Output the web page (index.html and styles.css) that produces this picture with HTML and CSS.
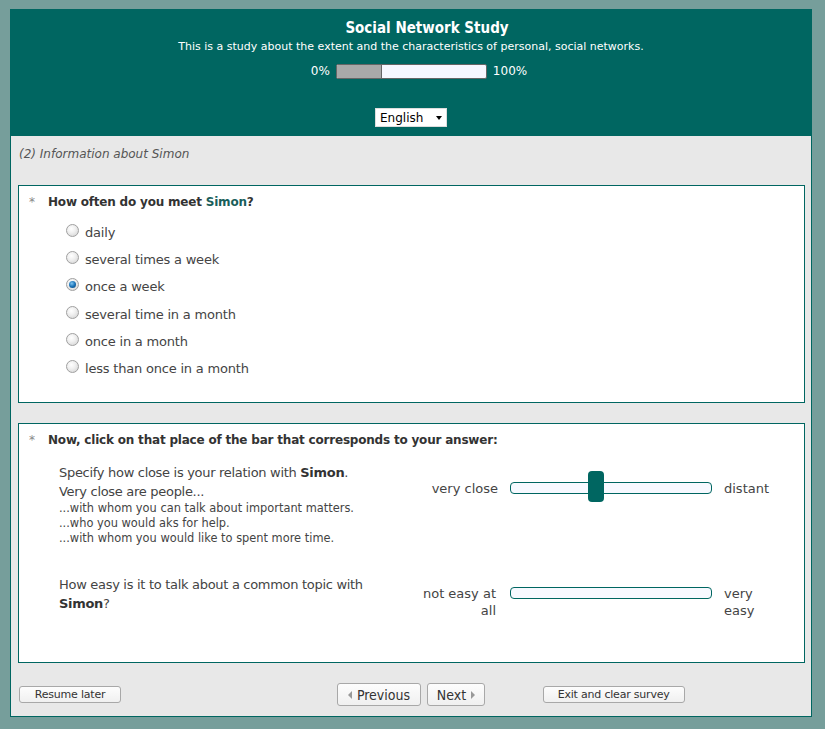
FILE: index.html
```html
<!DOCTYPE html>
<html lang="en">
<head>
<meta charset="utf-8">
<title>Social Network Study</title>
<link rel="stylesheet" href="styles.css">
</head>
<body>
<div class="page">
  <header class="header">
    <h1 class="title">Social Network Study</h1>
    <p class="subtitle">This is a study about the extent and the characteristics of personal, social networks.</p>
    <div class="progress">
      <span class="pct">0%</span>
      <span class="bar"><span class="bar-fill" style="width:30%"></span></span>
      <span class="pct">100%</span>
    </div>
    <div class="lang">
      <span class="select">English<span class="caret"></span></span>
    </div>
  </header>

  <main class="content">
    <p class="group-name">(2) Information about Simon</p>

    <section class="qbox q1">
      <div class="qtitle"><span class="star">*</span><span class="qtext">How often do you meet <span class="name">Simon</span>?</span></div>
      <ul class="answers">
        <li class="answer"><span class="radio"></span>daily</li>
        <li class="answer"><span class="radio"></span>several times a week</li>
        <li class="answer"><span class="radio checked"></span>once a week</li>
        <li class="answer"><span class="radio"></span>several time in a month</li>
        <li class="answer"><span class="radio"></span>once in a month</li>
        <li class="answer"><span class="radio"></span>less than once in a month</li>
      </ul>
    </section>

    <section class="qbox q2">
      <div class="qtitle"><span class="star">*</span><span class="qtext">Now, click on that place of the bar that corresponds to your answer:</span></div>
      <div class="srow srow-a">
        <div class="stext">
          <div class="big">Specify how close is your relation with <b>Simon</b>.</div>
          <div class="big">Very close are people...</div>
          <div class="small">...with whom you can talk about important matters.</div>
          <div class="small">...who you would aks for help.</div>
          <div class="small">...with whom you would like to spent more time.</div>
        </div>
        <div class="slider">
          <div class="lab-l">very close</div>
          <div class="track"><span class="thumb"></span></div>
          <div class="lab-r">distant</div>
        </div>
      </div>
      <div class="srow srow-b">
        <div class="stext">
          <div class="big">How easy is it to talk about a common topic with <b>Simon</b>?</div>
        </div>
        <div class="slider">
          <div class="lab-l">not easy at all</div>
          <div class="track"></div>
          <div class="lab-r">very easy</div>
        </div>
      </div>
    </section>
  </main>

  <footer class="footer">
    <div class="fcol fcol-left"><button class="btn btn-small">Resume later</button></div>
    <div class="fcol fcol-mid">
      <button class="btn btn-nav btn-prev"><span class="tri tri-l"></span>Previous</button>
      <button class="btn btn-nav btn-next">Next<span class="tri tri-r"></span></button>
    </div>
    <div class="fcol fcol-right"><button class="btn btn-small">Exit and clear survey</button></div>
  </footer>
</div>
</body>
</html>
```

FILE: styles.css
```css
* { box-sizing: border-box; }
html, body { margin: 0; padding: 0; }
body {
  background: #769e9b;
  font-family: "DejaVu Sans", Verdana, sans-serif;
  color: #444;
  width: 825px;
  height: 729px;
  overflow: hidden;
}
.page {
  margin: 9px 0 0 10px;
  width: 802px;
  height: 708px;
  border: 1px solid #006661;
  background: #e8e8e8;
  display: flex;
  flex-direction: column;
}
.header {
  background: #006661;
  color: #fff;
  height: 126px;
  padding-top: 9px;
  display: flex;
  flex-direction: column;
  align-items: center;
}
.title {
  margin: 0;
  padding-left: 32px;
  font-family: "DejaVu Sans Condensed", "DejaVu Sans", sans-serif;
  font-size: 15px;
  line-height: 18px;
  font-weight: bold;
}
.subtitle {
  margin: 3px 0 0;
  font-size: 11px;
  line-height: 14px;
}
.progress {
  margin-top: 10px;
  padding-left: 16px;
  display: flex;
  align-items: center;
  gap: 6px;
  font-size: 12px;
  line-height: 15px;
}
.bar {
  display: block;
  width: 151px;
  height: 15px;
  border: 1px solid #666;
  border-radius: 2px;
  background: #f7f8ff;
  overflow: hidden;
}
.bar-fill {
  display: block;
  height: 100%;
  background: #a9a9a9;
  border-right: 1px solid #666;
}
.lang { margin-top: 29px; }
.select {
  display: flex;
  align-items: center;
  width: 72px;
  height: 19px;
  background: #fff;
  color: #000;
  border: 1px solid #ddd;
  font-size: 12px;
  padding-left: 4px;
}
.caret {
  margin-left: auto;
  margin-right: 4px;
  width: 0;
  height: 0;
  border-left: 3.5px solid transparent;
  border-right: 3.5px solid transparent;
  border-top: 4px solid #000;
}
.content {
  padding: 10px 6px 0 8px;
}
.group-name {
  margin: 0;
  font-size: 12px;
  line-height: 16px;
  font-style: italic;
  color: #555;
}
.qbox {
  background: #fff;
  border: 1px solid #006661;
  margin-left: -1px;
}
.q1 { margin-top: 23px; height: 218px; padding: 8px 0 0 10px; }
.q2 { margin-top: 20px; height: 240px; padding: 8px 0 0 10px; }
.qtitle {
  display: flex;
  font-size: 12px;
  line-height: 16px;
}
.star { width: 19px; color: #888; }
.qtext { font-weight: bold; color: #333; letter-spacing: -0.2px; }
.name { color: #1a5f5b; }
.answers {
  list-style: none;
  margin: 9px 0 0;
  padding: 0 0 0 37px;
}
.answer {
  display: flex;
  align-items: center;
  height: 27.2px;
  font-size: 13px;
  letter-spacing: -0.2px;
  color: #444;
}
.radio {
  width: 13px;
  height: 13px;
  border-radius: 50%;
  border: 1px solid #a0a0a0;
  background: radial-gradient(circle at 40% 35%, #fff 0%, #f0f0f0 40%, #cfcfcf 100%);
  margin-right: 6px;
  margin-top: -4px;
  flex: none;
  display: flex;
  align-items: center;
  justify-content: center;
}
.radio.checked::after {
  content: "";
  width: 7px;
  height: 7px;
  border-radius: 50%;
  background: radial-gradient(circle at 40% 35%, #7fc4f0 0%, #1a73b8 50%, #0c3f6e 100%);
}
.srow {
  display: flex;
  padding-left: 30px;
}
.srow-a { margin-top: 15px; }
.srow-b { margin-top: 29px; }
.stext { width: 330px; color: #444; }
.big { font-size: 13px; line-height: 19px; letter-spacing: -0.3px; }
.big b { color: #333; }
.small { font-size: 11.4px; line-height: 15px; }
.slider {
  display: flex;
  align-items: flex-start;
  font-size: 13px;
  line-height: 17px;
  margin-left: 29px;
}
.srow-a .slider { margin-top: 17px; }
.srow-b .slider { margin-top: 10px; }
.lab-l {
  width: 80px;
  text-align: right;
}
.srow-b .lab-l { width: 78px; }
.track {
  position: relative;
  width: 202px;
  height: 12px;
  margin: 2px 12px 0 12px;
  border: 1px solid #006661;
  border-radius: 4px;
  background: #f7f9ff;
}
.srow-b .lab-l + .track { margin-left: 14px; }
.thumb {
  position: absolute;
  left: 77px;
  top: -12px;
  width: 16px;
  height: 31px;
  border-radius: 4px;
  background: #006661;
}
.lab-r { width: 50px; }
.footer {
  margin-top: auto;
  height: 53px;
  padding: 20px 8px 0;
  display: grid;
  grid-template-columns: 1fr 1fr 1fr;
  grid-template-rows: 23px;
  align-items: center;
}
.fcol { display: flex; align-items: center; }
.fcol-mid { justify-content: center; gap: 6px; }
.fcol-right { padding-left: 1px; }
.btn {
  font-family: "DejaVu Sans", sans-serif;
  color: #333;
  background: linear-gradient(#fdfdfd, #f0f0f0);
  border: 1px solid #a8a8a8;
  border-radius: 3px;
  padding: 0;
  display: flex;
  align-items: center;
  justify-content: center;
}
.btn-small { height: 17px; font-size: 11px; letter-spacing: -0.2px; }
.fcol-left .btn-small { width: 102px; }
.fcol-right .btn-small { width: 142px; }
.btn-nav {
  height: 23px;
  font-family: "DejaVu Sans Condensed", "DejaVu Sans", sans-serif;
  font-size: 14px;
  gap: 5px;
}
.btn-prev { width: 84px; }
.btn-next { width: 58px; }
.tri {
  width: 0;
  height: 0;
  border-top: 4px solid transparent;
  border-bottom: 4px solid transparent;
}
.tri-l { border-right: 4px solid #999; }
.tri-r { border-left: 4px solid #999; }
```
